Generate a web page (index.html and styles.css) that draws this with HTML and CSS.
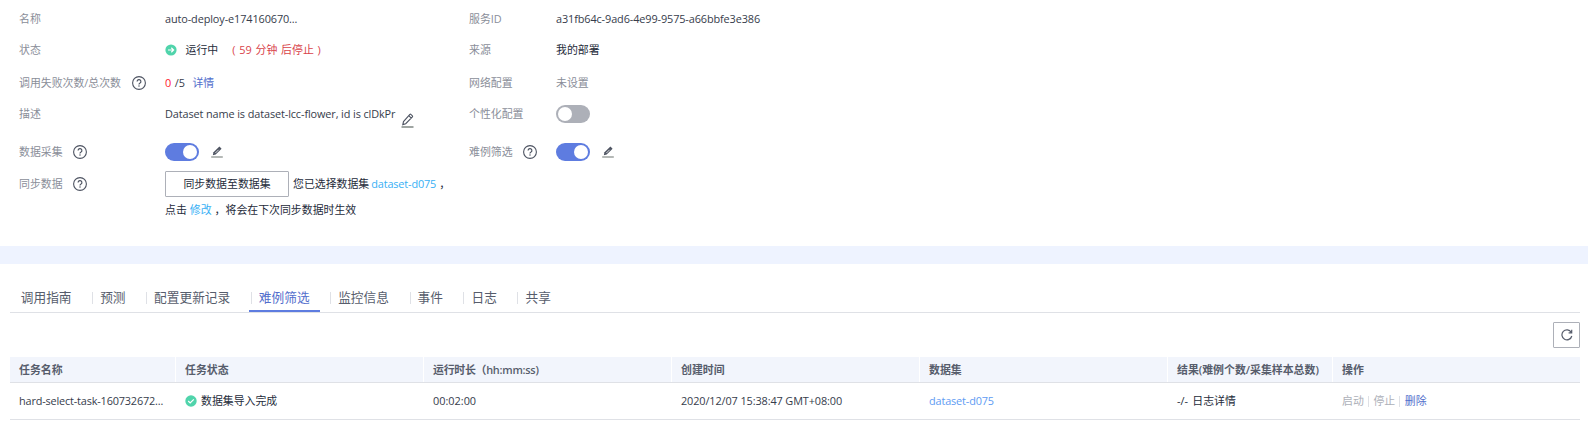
FILE: index.html
```html
<!DOCTYPE html>
<html lang="zh-CN">
<head>
<meta charset="utf-8">
<title>服务详情</title>
<link rel="stylesheet" href="styles.css">
</head>
<body>
<svg width="0" height="0" class="defs">
  <symbol id="help" viewBox="0 0 14 14"><circle cx="7" cy="7" r="6.4" fill="none" stroke="currentColor" stroke-width="1.1"/><path d="M5.1 5.5a1.9 1.9 0 1 1 2.7 1.7c-.6.3-.8.6-.8 1.2" fill="none" stroke="currentColor" stroke-width="1.2"/><circle cx="7" cy="10.1" r=".75" fill="currentColor"/></symbol>
  <symbol id="edit" viewBox="0 0 12 12"><path d="M1.8 9.2l.7-2.9L8.4.6l2.2 2.1-5.9 5.8z" fill="#4d5361"/><path d="M4.3 7.1L7.6 3.8" stroke="#fff" stroke-width=".8"/><path d="M.2 11h11.6" stroke="#959b98" stroke-width="1.4"/></symbol>
  <symbol id="pencil" viewBox="0 0 13 15"><path d="M1.8 11.6l.7-3L8.9 1.4q.5-.5 1 0l1.5 1.4q.5.5 0 1L4.7 10.7zM7.8 2.7l2.5 2.4" fill="none" stroke="#4d5361" stroke-width="1.1"/><path d="M.5 14h12" stroke="#959b98" stroke-width="1.8"/></symbol>
</svg>
<main class="page">
  <section class="details">
    <dl class="column column-main">
      <div class="row r1"><dt>名称</dt><dd class="latin">auto-deploy-e174160670...</dd></div>
      <div class="row r2"><dt>状态</dt><dd><svg class="state" viewBox="0 0 12 12"><circle cx="6" cy="6" r="5.6" fill="#50d4ab"/><path d="M3 6h5.5M6.3 3.8L8.6 6 6.3 8.2" fill="none" stroke="#fff" stroke-width="1.2"/></svg><span class="dark">运行中</span><span class="warning">( 59 分钟 后停止 )</span></dd></div>
      <div class="row r3"><dt>调用失败次数/总次数<svg class="help"><use href="#help"/></svg></dt><dd><span class="fail">0</span><span class="total">/5</span><a class="link">详情</a></dd></div>
      <div class="row r4"><dt>描述</dt><dd class="latin">Dataset name is dataset-lcc-flower, id is clDkPr<svg class="pencil"><use href="#pencil"/></svg></dd></div>
      <div class="row r5"><dt>数据采集<svg class="help"><use href="#help"/></svg></dt><dd><span class="switch on"></span><svg class="edit"><use href="#edit"/></svg></dd></div>
      <div class="row r6"><dt>同步数据<svg class="help"><use href="#help"/></svg></dt><dd class="dark"><button class="sync">同步数据至数据集</button><span class="picked">您已选择数据集</span><a class="sky latin-link">dataset-d075</a><span class="comma">，</span></dd></div>
      <div class="row r7"><dt></dt><dd class="dark">点击<a class="sky modify">修改</a><span class="comma">，</span>将会在下次同步数据时生效</dd></div>
    </dl>
    <dl class="column column-side">
      <div class="row r1"><dt>服务ID</dt><dd class="latin">a31fb64c-9ad6-4e99-9575-a66bbfe3e386</dd></div>
      <div class="row r2"><dt>来源</dt><dd class="dark">我的部署</dd></div>
      <div class="row r3"><dt>网络配置</dt><dd class="muted">未设置</dd></div>
      <div class="row r4"><dt>个性化配置</dt><dd><span class="switch"></span></dd></div>
      <div class="row r5"><dt>难例筛选<svg class="help"><use href="#help"/></svg></dt><dd><span class="switch on"></span><svg class="edit"><use href="#edit"/></svg></dd></div>
    </dl>
  </section>
  <div class="divider"></div>
  <section class="panel">
    <nav class="tabs">
      <a class="tab">调用指南</a><a class="tab">预测</a><a class="tab">配置更新记录</a><a class="tab active">难例筛选</a><a class="tab">监控信息</a><a class="tab">事件</a><a class="tab">日志</a><a class="tab">共享</a>
    </nav>
    <div class="toolbar"><button class="refresh"><svg viewBox="0 0 12 12"><path d="M10.8 7A5 5 0 1 1 10.2 3.2M10.7 .8v3H7.6" fill="none" stroke="#575d6c" stroke-width="1.2"/></svg></button></div>
    <div class="table">
      <div class="grid head"><span>任务名称</span><span>任务状态</span><span class="duration">运行时长（hh:mm:ss)</span><span>创建时间</span><span>数据集</span><span>结果(难例个数/采集样本总数)</span><span>操作</span></div>
      <div class="grid body"><span class="task">hard-select-task-160732672...</span><span class="dark"><svg class="done" viewBox="0 0 12 12"><circle cx="6" cy="6" r="5.7" fill="#50d4ab"/><path d="M3.2 6l2 2 3.6-3.7" fill="none" stroke="#fff" stroke-width="1.2"/></svg>数据集导入完成</span><span>00:02:00</span><span class="latin">2020/12/07 15:38:47 GMT+08:00</span><span><a class="blue latin-link">dataset-d075</a></span><span class="dark result">-/- 日志详情</span><span class="actions"><a>启动</a><i></i><a>停止</a><i></i><a class="link">删除</a></span></div>
    </div>
  </section>
</main>
</body>
</html>
```
FILE: styles.css
```css
* { box-sizing: border-box; }
body { margin: 0; background: #fff; color: #363c4b; font: 10.9px/18px "Open Sans", "Noto Sans CJK SC", sans-serif; }
.defs { display: block; height: 0; }
.page { width: 1588px; height: 422px; overflow: hidden; }
.details { display: flex; height: 246px; padding-left: 19px; }
.column { margin: 0; }
.column-main { width: 450px; }
.column-side { width: 500px; }
.row { display: flex; align-items: center; white-space: nowrap; }
.r1 { height: 38px; }
.r2 { height: 24px; }
.r3 { height: 41px; }
.r4 { height: 22px; }
.r5 { height: 54px; }
.r6 { height: 10px; }
.r7 { height: 42px; }
dt { display: flex; align-items: center; flex: none; width: 146px; color: #8a8e99; }
.column-side dt { width: 87px; }
dd { display: flex; align-items: center; margin: 0; }
.latin { letter-spacing: -0.11px; }
.latin-link { letter-spacing: -0.15px; }
.dark { color: #252b3a; }
.muted { color: #8a8e99; }
.link { color: #526ecc; }
.sky { color: #38b0f5; }
.blue { color: #5e9bf3; }
.help { width: 14px; height: 14px; margin-left: 10.5px; color: #4d5361; }
.state { width: 12px; height: 12px; margin-right: 8.5px; }
.warning { margin-left: 14px; word-spacing: 1px; color: #d9434a; }
.fail { color: #ff202e; }
.total { margin-left: 3.5px; }
.total + .link { margin-left: 7.5px; }
.pencil { width: 13px; height: 15px; margin: 13px 0 0 5.5px; }
.edit { width: 12px; height: 12px; margin-left: 12px; }
.switch { display: flex; align-items: center; width: 34px; height: 18px; padding: 0 2px; border-radius: 9px; background: #adb0b8; }
.switch::after { content: ""; width: 14px; height: 14px; border-radius: 50%; background: #fff; }
.switch.on { justify-content: flex-end; background: #5e7ce0; }
button { padding: 0; border: 1px solid #adb0b8; border-radius: 1px; background: #fff; color: inherit; font: inherit; }
.sync { width: 124px; height: 26px; }
.picked { margin: 0 2px 0 4px; }
.modify { margin-left: 3px; }
.comma { padding-left: 3px; }
.divider { height: 18px; background: #eef3ff; }
.panel { padding: 0 8px 0 10px; }
.tabs { display: flex; height: 49px; padding: 20px 0 0 1px; border-bottom: 1px solid #dfe1e6; font-size: 12.7px; line-height: 24px; color: #575d6c; }
.tab { display: flex; align-items: center; height: 28px; margin-right: 8px; padding: 0 10.6px 0 0; border-bottom: 2px solid transparent; }
.tab:first-child { padding-left: 9.8px; }
.tab + .tab::before { content: ""; width: 1px; height: 12px; margin: 2px 7px 0 2px; background: #dfe1e6; }
.tab.active { color: #526ecc; border-bottom-color: #5e7ce0; }
.toolbar { display: flex; justify-content: flex-end; height: 44px; padding-top: 9px; }
.refresh { display: flex; align-items: center; justify-content: center; width: 27px; height: 26px; }
.refresh svg { width: 12px; height: 12px; }
.grid { display: grid; grid-template-columns: 165px 248px 248px 248px 248px 165px 1fr; border-bottom: 1px solid #dfe1e6; align-items: stretch; }
.grid > span { display: flex; align-items: center; padding-left: 9px; white-space: nowrap; }
.head { height: 26px; background: #f2f5fc; color: #575d6c; font-weight: 600; }
.head > span + span { border-left: 1px solid #fff; }
.head .duration { letter-spacing: -0.25px; }
.body { height: 37px; }
.body > span + span { padding-left: 10px; }
.body .task { letter-spacing: -0.17px; }
.body .result { word-spacing: 1.5px; }
.done { width: 12px; height: 12px; margin-right: 4px; }
.actions { color: #adb0b8; }
.actions i { width: 1px; height: 11px; margin: 0 4.3px; background: #dfe1e6; }
```
